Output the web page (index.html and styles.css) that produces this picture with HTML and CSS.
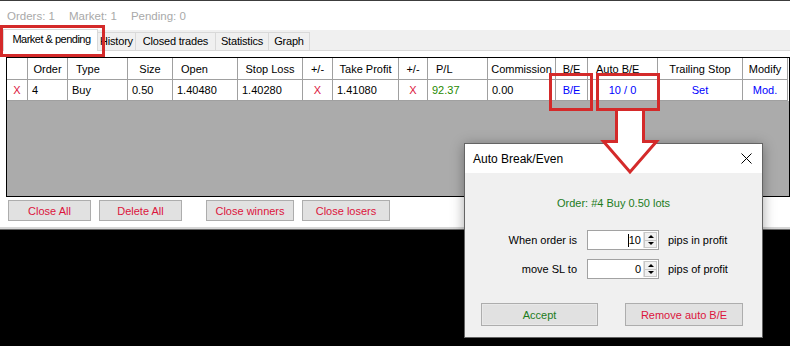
FILE: index.html
```html
<!DOCTYPE html>
<html>
<head>
<meta charset="utf-8">
<link rel="stylesheet" href="styles.css">
</head>
<body>
<div class="app">
  <div class="summary"><span>Orders: 1</span><span>Market: 1</span><span>Pending: 0</span></div>
  <div class="tabstrip">
    <div class="tab active w-mp">Market &amp; pending</div>
    <div class="tab w-hi">History</div>
    <div class="tab w-ct">Closed trades</div>
    <div class="tab w-st">Statistics</div>
    <div class="tab w-gr">Graph</div>
  </div>
  <div class="panel">
    <div class="grid">
      <div class="row head">
        <div class="c"></div>
        <div class="c ctr">Order</div>
        <div class="c lft">Type</div>
        <div class="c ctr">Size</div>
        <div class="c lft">Open</div>
        <div class="c ctr">Stop Loss</div>
        <div class="c ctr">+/-</div>
        <div class="c ctr">Take Profit</div>
        <div class="c ctr">+/-</div>
        <div class="c lft">P/L</div>
        <div class="c ctr">Commission</div>
        <div class="c ctr">B/E</div>
        <div class="c lft">Auto B/E</div>
        <div class="c ctr">Trailing Stop</div>
        <div class="c ctr">Modify</div>
      </div>
      <div class="row data">
        <div class="c ctr red">X</div>
        <div class="c lft">4</div>
        <div class="c lft">Buy</div>
        <div class="c lft">0.50</div>
        <div class="c lft">1.40480</div>
        <div class="c lft">1.40280</div>
        <div class="c ctr red">X</div>
        <div class="c lft">1.41080</div>
        <div class="c ctr red">X</div>
        <div class="c lft green">92.37</div>
        <div class="c lft">0.00</div>
        <div class="c ctr blue">B/E</div>
        <div class="c ctr blue">10 / 0</div>
        <div class="c ctr blue">Set</div>
        <div class="c ctr blue">Mod.</div>
      </div>
      <div class="empty"></div>
    </div>
  </div>
  <div class="actions">
    <button class="btn w83">Close All</button>
    <button class="btn w83">Delete All</button>
    <button class="btn w88 gap-l">Close winners</button>
    <button class="btn w88">Close losers</button>
  </div>
  <div class="chart"></div>
</div>

<div class="dialog">
  <div class="dlg-title">
    <span>Auto Break/Even</span>
    <svg class="close" width="11" height="11" viewBox="0 0 11 11"><path d="M0.5 0.5 L10.5 10.5 M10.5 0.5 L0.5 10.5" stroke="#000" stroke-width="1" fill="none"/></svg>
  </div>
  <div class="dlg-body">
    <div class="order-line">Order: #4 Buy 0.50 lots</div>
    <div class="form">
      <div class="frow">
        <div class="flabel">When order is</div>
        <div class="num"><span class="caret"></span><span class="val">10</span><div class="spin"><div class="sb"><i class="up"></i></div><div class="sb"><i class="dn"></i></div></div></div>
        <div class="funit">pips in profit</div>
      </div>
      <div class="frow">
        <div class="flabel">move SL to</div>
        <div class="num"><span class="val">0</span><div class="spin"><div class="sb"><i class="up"></i></div><div class="sb"><i class="dn"></i></div></div></div>
        <div class="funit">pips of profit</div>
      </div>
    </div>
    <div class="dlg-actions">
      <button class="dbtn accept">Accept</button>
      <button class="dbtn remove">Remove auto B/E</button>
    </div>
  </div>
</div>

<svg class="annot" width="790" height="346" viewBox="0 0 790 346">
  <rect x="1.5" y="26.5" width="102" height="29" fill="none" stroke="#d42a2a" stroke-width="3"/>
  <rect x="550.5" y="74.5" width="41" height="35" fill="none" stroke="#d42a2a" stroke-width="3"/>
  <rect x="597.5" y="74.5" width="61" height="35" fill="none" stroke="#d42a2a" stroke-width="3"/>
  <polygon points="616.5,109.5 643.5,109.5 643.5,141.5 656.5,141.5 630,172 603.5,141.5 616.5,141.5" fill="#fff" stroke="#d42a2a" stroke-width="3"/>
</svg>
</body>
</html>
```

FILE: styles.css
```css
html, body {
  margin: 0;
  padding: 0;
}
body {
  width: 790px;
  height: 346px;
  overflow: hidden;
  background: #000;
  position: relative;
  font-family: "Liberation Sans", Arial, sans-serif;
  font-size: 11px;
  color: #000;
}
.app {
  display: flex;
  flex-direction: column;
  height: 346px;
  background: #fff;
  border-top: 1px solid #3c3c3c;
  box-sizing: border-box;
}
.summary {
  height: 29px;
  display: flex;
  align-items: center;
  gap: 14px;
  padding-left: 7px;
  color: #a9a9a9;
  font-size: 11.5px;
}
.tabstrip {
  height: 21px;
  box-sizing: border-box;
  background: #f0f0f0;
  border-bottom: 1px solid #d9d9d9;
  display: flex;
  align-items: flex-end;
  padding-left: 3px;
}
.tab {
  height: 18px;
  line-height: 17px;
  box-sizing: border-box;
  border: 1px solid #d9d9d9;
  border-bottom: none;
  border-left: none;
  background: #f0f0f0;
  text-align: center;
  white-space: nowrap;
  letter-spacing: -0.2px;
}
.tab.active {
  height: 22px;
  line-height: 19px;
  background: #fff;
  border-left: 1px solid #d9d9d9;
  margin-bottom: -1px;
  position: relative;
  letter-spacing: -0.5px;
  padding-left: 2px;
}
.w-mp { width: 95px; }
.w-hi { width: 38px; }
.w-ct { width: 80px; }
.w-st { width: 53px; }
.w-gr { width: 41px; }

.panel {
  padding: 6px 0 0 6px;
}
.grid {
  width: 784px;
  height: 140px;
  box-sizing: border-box;
  border: 1px solid #000;
  display: flex;
  flex-direction: column;
  background: #fff;
}
.row {
  display: grid;
  grid-template-columns: 21px 40px 60px 45px 65px 65px 30px 66px 29px 60px 68px 32px 70px 85px 45px;
}
.row.head { height: 22px; }
.row.data { height: 21px; }
.c {
  box-sizing: border-box;
  border-right: 1px solid #a0a0a0;
  border-bottom: 1px solid #a0a0a0;
  display: flex;
  align-items: center;
  white-space: nowrap;
  overflow: hidden;
}
.ctr { justify-content: center; }
.head .lft { padding-left: 8px; }
.data .lft { padding-left: 4px; }
.red { color: #dc143c; }
.green { color: #1f8a00; }
.blue { color: #0000ff; }
.empty {
  flex: 1;
  background: #ababab;
}

.actions {
  height: 32px;
  box-sizing: border-box;
  padding: 3px 0 0 8px;
  border-bottom: 2px solid #d6d6d6;
  display: flex;
  align-items: flex-start;
  gap: 8px;
}
.btn {
  height: 21px;
  box-sizing: border-box;
  border: 1px solid #adadad;
  background: #e1e1e1;
  color: #dc143c;
  font-family: "Liberation Sans", Arial, sans-serif;
  font-size: 11px;
  padding: 0;
  margin: 0;
}
.w83 { width: 83px; }
.w88 { width: 88px; }
.gap-l { margin-left: 16px; }
.chart {
  flex: 1;
  background: #000;
  border-top: 1px solid #696969;
}

.dialog {
  position: absolute;
  left: 464px;
  top: 143px;
  width: 299px;
  height: 195px;
  box-sizing: border-box;
  border: 1px solid #646464;
  background: #f0f0f0;
  display: flex;
  flex-direction: column;
  box-shadow: 0 2px 12px rgba(0, 0, 0, 0.35);
}
.dlg-title {
  height: 29px;
  background: #fff;
  display: flex;
  align-items: center;
  justify-content: space-between;
  padding: 0 10px 0 8px;
  font-size: 12px;
}
.close { display: block; }
.dlg-body {
  flex: 1;
  padding-top: 24px;
}
.order-line {
  text-align: center;
  line-height: 13px;
  color: #1c7c1c;
}
.form {
  margin-top: 20px;
  display: flex;
  flex-direction: column;
  gap: 9px;
}
.frow {
  display: flex;
  align-items: center;
  height: 20px;
}
.flabel {
  width: 122px;
  box-sizing: border-box;
  padding-right: 10px;
  text-align: right;
  white-space: nowrap;
}
.num {
  width: 72px;
  height: 20px;
  box-sizing: border-box;
  border: 1px solid #a2a2a2;
  background: #fff;
  display: flex;
  align-items: center;
  justify-content: flex-end;
  padding-right: 1px;
}
.caret {
  width: 1px;
  height: 13px;
  background: #000;
}
.val {
  margin-right: 2px;
}
.spin {
  width: 13px;
  height: 16px;
  display: flex;
  flex-direction: column;
  border-left: 1px solid #e0e0e0;
}
.sb {
  flex: 1;
  background: #f0f0f0;
  border: 1px solid #c8c8c8;
  display: flex;
  align-items: center;
  justify-content: center;
  box-sizing: border-box;
}
.sb + .sb { border-top: none; }
.up, .dn {
  width: 0;
  height: 0;
  border-left: 3px solid transparent;
  border-right: 3px solid transparent;
}
.up { border-bottom: 3px solid #000; }
.dn { border-top: 3px solid #000; }
.funit {
  margin-left: 9px;
  white-space: nowrap;
}
.dlg-actions {
  margin-top: 24px;
  padding-left: 16px;
  display: flex;
  gap: 27px;
}
.dbtn {
  height: 23px;
  box-sizing: border-box;
  border: 1px solid #adadad;
  background: #e1e1e1;
  font-family: "Liberation Sans", Arial, sans-serif;
  font-size: 11px;
  padding: 0;
  margin: 0;
}
.accept {
  width: 117px;
  color: #1c7c1c;
  box-shadow: inset 0 0 0 1px #e8e8e8;
}
.remove {
  width: 118px;
  color: #dc143c;
}
.annot {
  position: absolute;
  left: 0;
  top: 0;
  pointer-events: none;
}
```
